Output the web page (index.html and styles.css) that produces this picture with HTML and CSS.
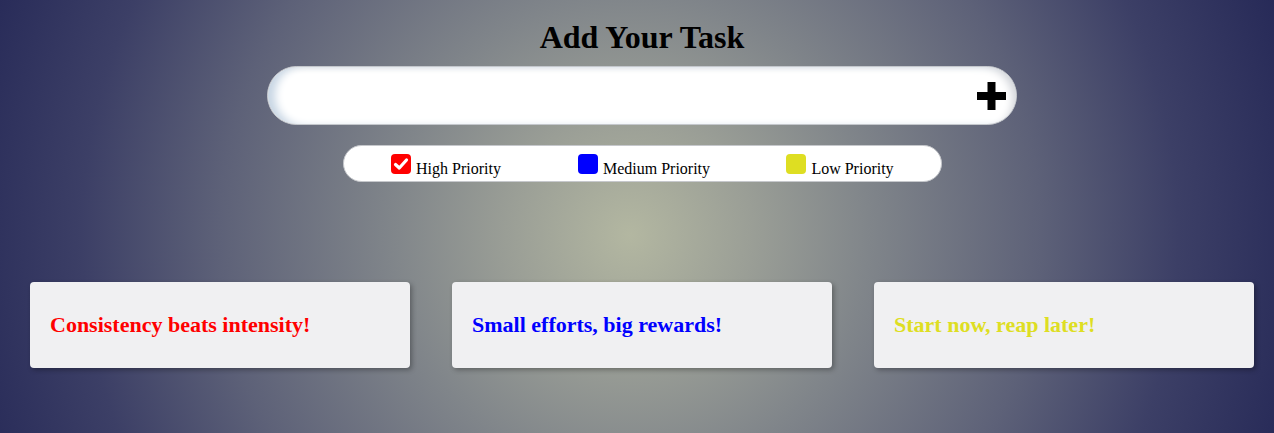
FILE: index.html
```html
<!DOCTYPE html>
<html lang="en">
<head>
<meta charset="utf-8">
<title>Add Your Task</title>
<link rel="stylesheet" href="styles.css">
</head>
<body>
<main class="page">
  <h1 class="title">Add Your Task</h1>
  <div class="task-bar">
    <input class="task-input" type="text" aria-label="Task">
    <button class="add-btn" aria-label="Add">
      <svg width="29" height="28" viewBox="0 0 29 28"><path d="M14.5 0V28M0 14H29" stroke="#000" stroke-width="8"/></svg>
    </button>
  </div>
  <div class="legend">
    <label class="legend-item">
      <span class="box box-high">
        <svg width="20" height="20" viewBox="0 0 20 20"><path d="M4.5 10.5L8.3 14L15.5 6" fill="none" stroke="#fff" stroke-width="3.2" stroke-linecap="round" stroke-linejoin="round"/></svg>
      </span>
      <span class="legend-label">High Priority</span>
    </label>
    <label class="legend-item">
      <span class="box box-medium"></span>
      <span class="legend-label">Medium Priority</span>
    </label>
    <label class="legend-item">
      <span class="box box-low"></span>
      <span class="legend-label">Low Priority</span>
    </label>
  </div>
  <section class="cards">
    <div class="card"><h2 class="card-text text-high">Consistency beats intensity!</h2></div>
    <div class="card"><h2 class="card-text text-medium">Small efforts, big rewards!</h2></div>
    <div class="card"><h2 class="card-text text-low">Start now, reap later!</h2></div>
  </section>
</main>
</body>
</html>
```

FILE: styles.css
```css
html, body {
  margin: 0;
  height: 100%;
}
body {
  font-family: "Liberation Serif", "Times New Roman", serif;
  background: radial-gradient(circle farthest-corner at 630px 235px, #b3b7a1 0%, #9a9e96 18%, #80858a 35%, #5d6178 60%, #3c3f66 80%, #272a58 100%);
  overflow: hidden;
}
.page {
  padding-left: 10px;
  display: flex;
  flex-direction: column;
  align-items: center;
}
.title {
  font-size: 32px;
  font-weight: bold;
  margin: 19px 0 0;
  line-height: 37px;
}
.task-bar {
  margin-top: 10px;
  width: 750px;
  height: 59px;
  box-sizing: border-box;
  background: #fff;
  border: 1px solid #c4c7cc;
  border-radius: 30px;
  box-shadow: inset 10px 0 8px -3px #c8d6e4, inset -8px 4px 8px -5px #d0d3d8;
  display: flex;
  align-items: center;
  overflow: hidden;
}
.task-input {
  flex: 1;
  border: none;
  background: transparent;
  height: 100%;
  outline: none;
  padding: 0 24px;
  font-size: 18px;
}
.add-btn {
  border: none;
  background: transparent;
  padding: 0;
  margin-right: 10px;
  width: 29px;
  height: 28px;
  display: flex;
}
.legend {
  margin-top: 20px;
  width: 599px;
  height: 37px;
  box-sizing: border-box;
  background: #fff;
  border: 1px solid #c6c8cc;
  border-radius: 19px;
  display: grid;
  grid-template-columns: repeat(3, 1fr);
  align-items: center;
  font-size: 16px;
}
.legend-item {
  display: flex;
  align-items: flex-end;
  justify-content: center;
  gap: 5px;
  padding-top: 4px;
}
.legend-item:first-child {
  padding-left: 6px;
}
.legend-item:nth-child(2) {
  padding-left: 4px;
}
.legend-item:last-child {
  padding-right: 2px;
}
.legend-label {
  line-height: 16px;
}
.box {
  width: 20px;
  height: 20px;
  border-radius: 4px;
  display: flex;
  margin-bottom: 3px;
}
.box-high { background: #ff0000; }
.box-medium { background: #0000ff; }
.box-low { background: #dede22; }
.cards {
  margin-top: 100px;
  align-self: stretch;
  display: flex;
  gap: 42px;
  padding: 0 20px;
}
.card {
  width: 380px;
  height: 86px;
  background: #f0f0f2;
  border-radius: 4px;
  box-shadow: 2px 2px 5px rgba(0,0,0,0.3);
  display: flex;
  align-items: center;
  padding-left: 20px;
  box-sizing: border-box;
}
.card-text {
  margin: 0;
  font-size: 22px;
  font-weight: bold;
}
.text-high { color: #ff0000; }
.text-medium { color: #0000ff; }
.text-low { color: #dede22; }
```
